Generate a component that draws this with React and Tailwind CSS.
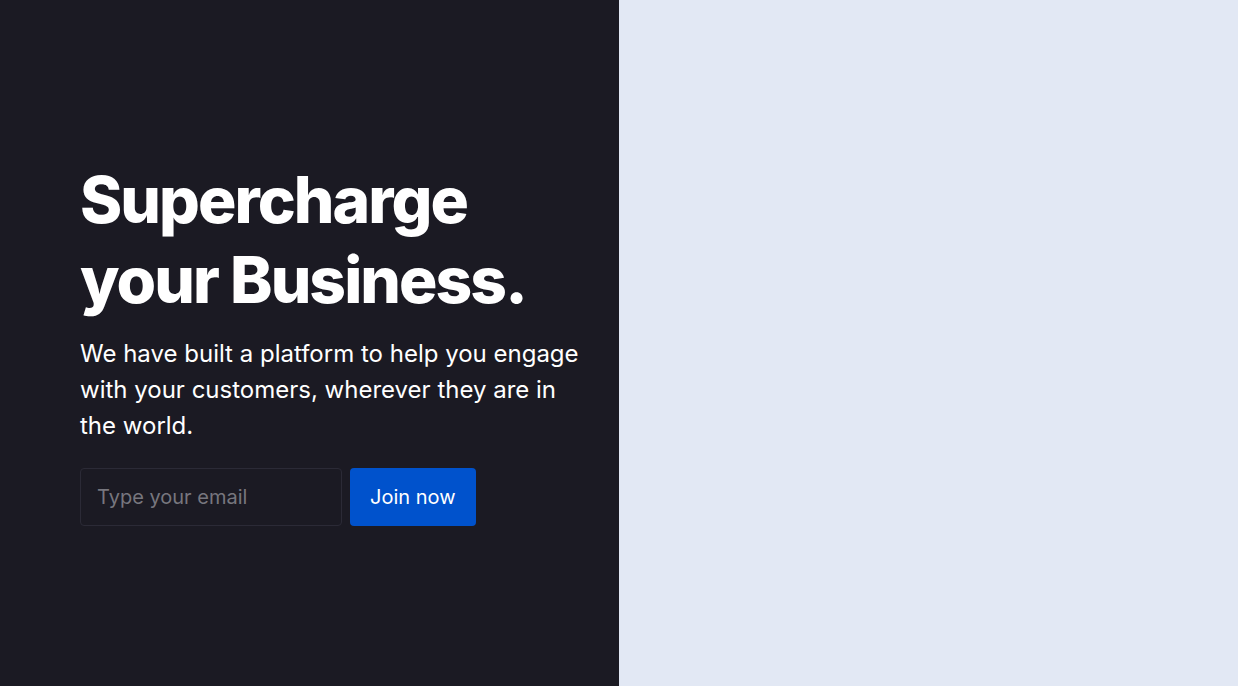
export default function App() {
  return (
    <div className="flex h-[686px] w-full font-['Inter',sans-serif]">
      <section className="flex w-1/2 flex-col justify-center bg-[#1b1a23] pl-20">
        <div className="w-[510px]">
          <h1 className="text-[64px] font-extrabold leading-[80px] tracking-[-0.03em] text-white">
            Supercharge your Business.
          </h1>
          <p className="mt-4 text-[24px] leading-[36px] text-white">
            We have built a platform to help you engage with your customers, wherever they are in the world.
          </p>
          <form className="mt-6 flex gap-2" onSubmit={(e) => e.preventDefault()}>
            <input
              type="email"
              placeholder="Type your email"
              className="h-[58px] w-[262px] rounded border border-[#2b2a36] bg-[#1b1a23] px-4 text-[20px] text-white outline-none placeholder:text-[#77767e]"
            />
            <button className="h-[58px] rounded bg-[#0052cc] px-5 text-[20px] text-white">
              Join now
            </button>
          </form>
        </div>
      </section>
      <section className="w-1/2 bg-[#e2e8f4]" />
    </div>
  );
}
